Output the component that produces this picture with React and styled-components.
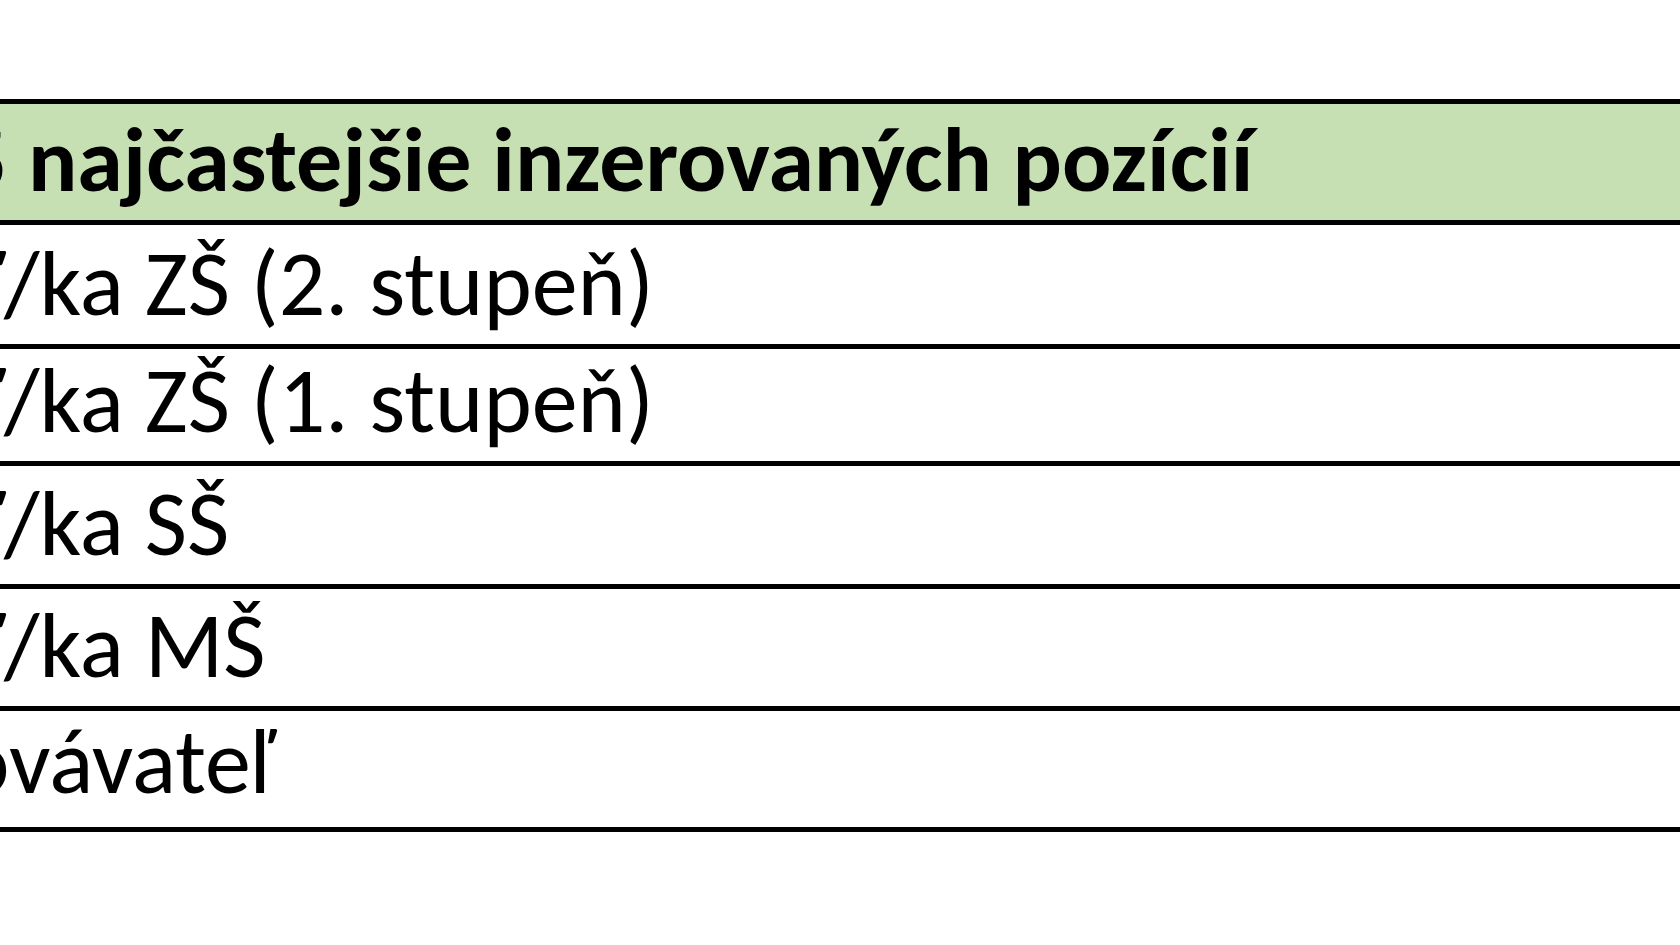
import { useLayoutEffect, useRef, useState } from "react";
import styled, { createGlobalStyle } from "styled-components";

const GlobalStyle = createGlobalStyle`
  html,
  body {
    margin: 0;
    padding: 0;
    background: #ffffff;
    overflow: hidden;
  }

  body {
    font-family: Carlito, Lato, "Liberation Sans", sans-serif;
    color: #000000;
  }
`;

const Page = styled.div`
  width: 1680px;
  height: 945px;
  padding-top: 99px;
  box-sizing: border-box;
  overflow: hidden;
`;

const Table = styled.div`
  display: flex;
  flex-direction: column;
  width: 1680px;
`;

const Row = styled.div`
  display: flex;
  align-items: flex-end;
  box-sizing: border-box;
  height: ${(p) => p.$height + (p.$last ? 5 : 0)}px;
  padding-bottom: ${(p) => (p.$last ? 19 : 14)}px;
  border-top: 5px solid #000000;
  border-bottom: ${(p) => (p.$last ? "5px solid #000000" : "none")};
  background: ${(p) => (p.$head ? "#c6e0b4" : "#ffffff")};
  overflow: hidden;
`;

const Text = styled.div`
  white-space: nowrap;
  font-size: 92px;
  line-height: 1;
  font-weight: ${(p) => (p.$head ? 700 : 400)};
`;

// the sheet is cut off at the left edge, so each text is shifted until
// its first visible glyph lands where it does in the picture
const Cell = ({ head, prefix, rest, anchor }) => {
  const prefixRef = useRef(null);
  const [indent, setIndent] = useState(0);

  useLayoutEffect(() => {
    if (prefixRef.current) {
      setIndent(anchor - prefixRef.current.getBoundingClientRect().width);
    }
  }, [anchor]);

  return (
    <Text $head={head} style={{ marginLeft: indent }}>
      <span ref={prefixRef}>{prefix}</span>
      {rest}
    </Text>
  );
};

const positions = [
  { prefix: "Učiteľ", rest: "/ka ZŠ (2. stupeň)", anchor: 4, height: 124 },
  { prefix: "Učiteľ", rest: "/ka ZŠ (1. stupeň)", anchor: 4, height: 117 },
  { prefix: "Učiteľ", rest: "/ka SŠ", anchor: 4, height: 123 },
  { prefix: "Učiteľ", rest: "/ka MŠ", anchor: 4, height: 122 },
  { prefix: "Vycho", rest: "vávateľ", anchor: 9, height: 121 },
];

const App = () => (
  <>
    <GlobalStyle />
    <Page>
      <Table>
        <Row $head $height={121}>
          <Cell
            head
            prefix="Top 5 "
            rest="najčastejšie inzerovaných pozícií"
            anchor={28}
          />
        </Row>
        {positions.map((p, i) => (
          <Row
            key={p.prefix + p.rest}
            $height={p.height}
            $last={i === positions.length - 1}
          >
            <Cell prefix={p.prefix} rest={p.rest} anchor={p.anchor} />
          </Row>
        ))}
      </Table>
    </Page>
  </>
);

export default App;
